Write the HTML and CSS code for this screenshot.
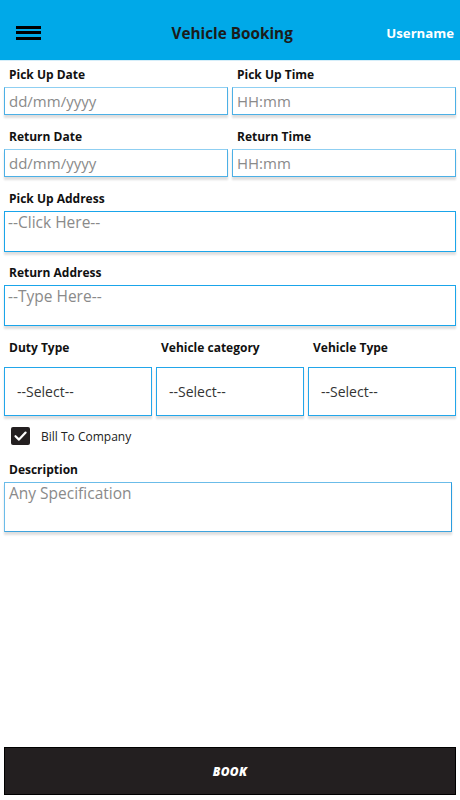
FILE: index.html
```html
<!DOCTYPE html>
<html>
<head>
<meta charset="utf-8">
<link rel="stylesheet" href="styles.css">
</head>
<body>
<header class="topbar">
  <div class="menu" aria-label="menu"><span></span><span></span><span></span></div>
  <h1 class="title">Vehicle Booking</h1>
  <div class="user">Username</div>
</header>
<main class="form">
  <div class="row two">
    <div class="field">
      <label class="lbl">Pick Up Date</label>
      <input class="inp" type="text" placeholder="dd/mm/yyyy">
    </div>
    <div class="field">
      <label class="lbl">Pick Up Time</label>
      <input class="inp" type="text" placeholder="HH:mm">
    </div>
  </div>
  <div class="row two">
    <div class="field">
      <label class="lbl">Return Date</label>
      <input class="inp" type="text" placeholder="dd/mm/yyyy">
    </div>
    <div class="field">
      <label class="lbl">Return Time</label>
      <input class="inp" type="text" placeholder="HH:mm">
    </div>
  </div>
  <div class="row">
    <div class="field">
      <label class="lbl">Pick Up Address</label>
      <textarea class="area addr" placeholder="--Click Here--"></textarea>
    </div>
  </div>
  <div class="row tight">
    <div class="field">
      <label class="lbl">Return Address</label>
      <textarea class="area addr" placeholder="--Type Here--"></textarea>
    </div>
  </div>
  <div class="row three">
    <div class="field">
      <label class="lbl sel-lbl">Duty Type</label>
      <div class="sel">--Select--</div>
    </div>
    <div class="field">
      <label class="lbl sel-lbl">Vehicle category</label>
      <div class="sel">--Select--</div>
    </div>
    <div class="field">
      <label class="lbl sel-lbl">Vehicle Type</label>
      <div class="sel">--Select--</div>
    </div>
  </div>
  <div class="check-row">
    <span class="box">
      <svg width="19" height="18" viewBox="0 0 19 18"><path d="M4.5 9.2 L8 12.6 L14.6 5.6" fill="none" stroke="#fff" stroke-width="2.2" stroke-linecap="round" stroke-linejoin="round"/></svg>
    </span>
    <span class="check-text">Bill To Company</span>
  </div>
  <div class="row desc-row">
    <div class="field">
      <label class="lbl">Description</label>
      <textarea class="area desc" placeholder="Any Specification"></textarea>
    </div>
  </div>
</main>
<footer class="foot">
  <button class="book">BOOK</button>
</footer>
</body>
</html>
```
FILE: styles.css
```css
* { box-sizing: border-box; }
html, body { margin: 0; padding: 0; }
body {
  width: 460px;
  height: 800px;
  font-family: "Open Sans", "Noto Sans", sans-serif;
  background: #fff;
  color: #111;
  display: flex;
  flex-direction: column;
}
.topbar {
  height: 61px;
  background: #00a9e8;
  border-bottom: 1px solid #d6eef9;
  display: flex;
  align-items: center;
  padding: 0 6px 0 16px;
}
.menu {
  width: 25px;
  display: flex;
  flex-direction: column;
  gap: 2.5px;
  margin-top: 5px;
}
.menu span {
  display: block;
  height: 3px;
  background: #000;
}
.title {
  flex: 1;
  margin: 5px 0 0;
  text-align: center;
  font-size: 15.3px;
  font-weight: 700;
  color: #1b1b1b;
  padding-left: 37px;
}
.user {
  font-size: 13.2px;
  font-weight: 700;
  color: #fff;
  margin-top: 5px;
}
.form {
  padding: 0 4px;
  flex: 1;
}
.row { display: flex; gap: 4px; margin-top: 8px; }
.row:first-child { margin-top: 0; }
.row.tight { margin-top: 7px; }
.row .field { flex: 1; min-width: 0; display: flex; flex-direction: column; }
.lbl {
  display: block;
  height: 26px;
  line-height: 28px;
  padding-left: 5px;
  font-size: 12px;
  font-weight: 700;
  color: #111;
}
.sel-lbl { margin-bottom: 7px; }
.inp, .area, .sel {
  width: 100%;
  margin: 0;
  font-family: "Open Sans", "Noto Sans", sans-serif;
  background: #fff;
  border: 1px solid #4cb0e6;
  border-top-color: #8fcff2;
  border-radius: 0;
  outline: none;
  box-shadow: 0 3px 2px 0 rgba(0, 0, 0, 0.13);
}
.inp {
  height: 28px;
  padding: 0 4px;
  font-size: 15px;
}
.inp::placeholder, .area::placeholder { color: #8a8a8a; opacity: 1; }
.area {
  resize: none;
  display: block;
  padding: 0 3px;
  font-size: 15.5px;
  line-height: 20px;
  overflow: hidden;
}
.addr {
  height: 41px;
  border-color: #1aa5ea;
}
.sel {
  height: 49px;
  display: flex;
  align-items: center;
  padding-left: 12px;
  padding-bottom: 1px;
  font-size: 14px;
  color: #333;
  border-color: #22a6ea;
}
.check-row {
  display: flex;
  align-items: center;
  height: 18px;
  margin-top: 11px;
  padding-left: 7px;
}
.box {
  width: 19px;
  height: 18px;
  background: #231f20;
  border-radius: 2px;
  display: flex;
}
.check-text {
  margin-left: 11px;
  font-size: 12px;
  color: #222;
}
.desc-row { margin-top: 11px; width: 448px; }
.desc {
  height: 50px;
  padding: 0 4px;
  border-color: #6bbce9;
  border-right-color: #2b9de0;
  border-bottom-color: #3ea3dd;
}
.foot { padding: 0 4px 5px; }
.book {
  width: 100%;
  height: 48px;
  background: #231f20;
  border: 1px solid #000;
  color: #fff;
  font-family: "Open Sans", "Noto Sans", sans-serif;
  font-weight: 800;
  font-style: italic;
  font-size: 12px;
  letter-spacing: 0.3px;
  padding: 0;
  display: block;
}
```
